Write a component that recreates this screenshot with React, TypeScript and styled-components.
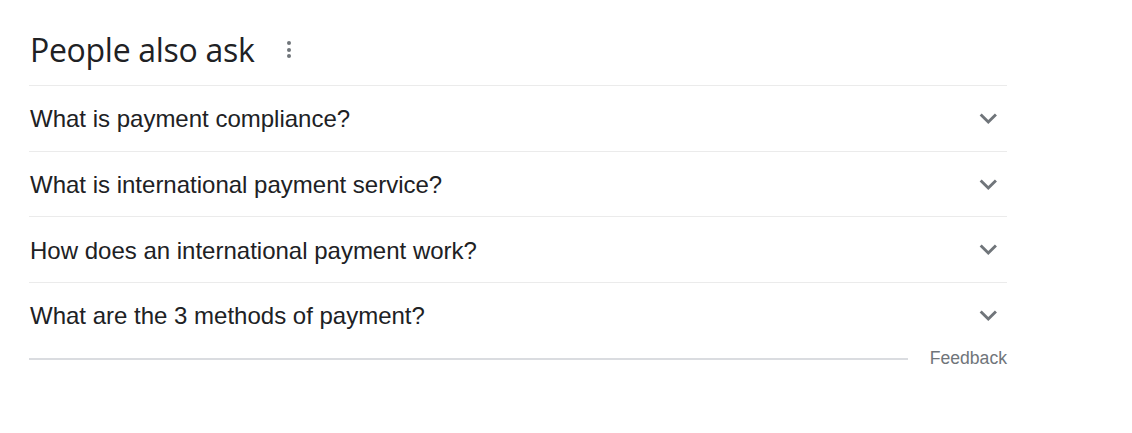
import styled, { createGlobalStyle } from 'styled-components'

const GlobalStyle = createGlobalStyle`
  body {
    margin: 0;
    background: #fff;
    font-family: 'Liberation Sans', Arial, sans-serif;
  }
`

const Wrapper = styled.div`
  width: 978px;
  padding: 30px 0 0 29px;
`

const Header = styled.div`
  display: flex;
  align-items: center;
  box-sizing: border-box;
  height: 55px;
  padding-bottom: 16px;
  gap: 29px;
`

const Title = styled.h2`
  margin: 0 0 0 1px;
  font-family: 'Open Sans', Roboto, sans-serif;
  font-weight: 400;
  font-size: 32px;
  line-height: 39px;
  letter-spacing: -0.3px;
  color: #202124;
`

const MenuButton = styled.div`
  display: flex;
  flex-direction: column;
  align-items: center;
  gap: 2.5px;
  padding: 0 4px;
`

const Dot = styled.span`
  width: 4px;
  height: 4px;
  border-radius: 50%;
  background: #70757a;
`

const Row = styled.div`
  display: flex;
  align-items: center;
  justify-content: space-between;
  box-sizing: border-box;
  height: 65.67px;
  padding-top: 2px;
  border-top: 1px solid #ebebeb;
`

const Question = styled.span`
  padding-left: 1px;
  font-size: 24px;
  color: #202124;
`

const Chevron = styled.svg`
  width: 34.6px;
  height: 34.6px;
  margin: -2px 1px 0 0;
  fill: #70757a;
`

const Footer = styled.div`
  display: flex;
  align-items: center;
  height: 20px;
  margin-top: 1px;
  gap: 22px;
`

const Rule = styled.div`
  flex: 1;
  height: 2px;
  background: #dadce0;
`

const Feedback = styled.span`
  font-size: 17.6px;
  color: #70757a;
`

const questions = [
  'What is payment compliance?',
  'What is international payment service?',
  'How does an international payment work?',
  'What are the 3 methods of payment?',
]

export default function App() {
  return (
    <>
      <GlobalStyle />
      <Wrapper>
        <Header>
          <Title>People also ask</Title>
          <MenuButton>
            <Dot />
            <Dot />
            <Dot />
          </MenuButton>
        </Header>
        {questions.map((q) => (
          <Row key={q}>
            <Question>{q}</Question>
            <Chevron viewBox='0 0 24 24'>
              <path d='M16.59 8.59 12 13.17 7.41 8.59 6 10l6 6 6-6z' />
            </Chevron>
          </Row>
        ))}
        <Footer>
          <Rule />
          <Feedback>Feedback</Feedback>
        </Footer>
      </Wrapper>
    </>
  )
}
